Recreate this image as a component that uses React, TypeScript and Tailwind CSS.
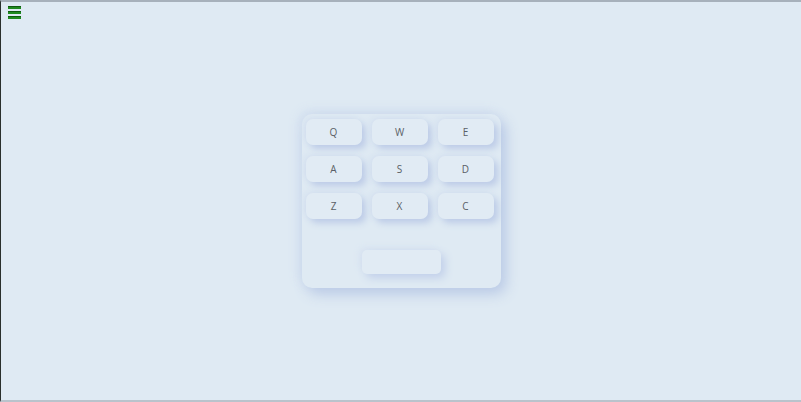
import React from "react";

const rows = [
  ["Q", "W", "E"],
  ["A", "S", "D"],
  ["Z", "X", "C"],
];

export default function App() {
  return (
    <div
      className="relative h-[402px] w-[801px] overflow-hidden bg-[#dfeaf3] border-t-[2px] border-t-[#a7b1bb] border-b-[2px] border-b-[#b9c3cc] border-l border-l-[#2a302c]"
      style={{ fontFamily: '"Open Sans", "Noto Sans", sans-serif' }}
    >
      <button className="absolute left-[7px] top-[4px] flex flex-col gap-[2px] p-0">
        <span className="block h-[3px] w-[13px] bg-[#1f8a1f] border-t border-t-[#0f5a0f]" />
        <span className="block h-[3px] w-[13px] bg-[#1f8a1f] border-t border-t-[#0f5a0f]" />
        <span className="block h-[3px] w-[13px] bg-[#1f8a1f] border-t border-t-[#0f5a0f]" />
      </button>

      <div className="flex h-full w-full items-center justify-center">
        <div className="flex h-[174px] w-[199px] flex-col rounded-[10px] bg-[#dfeaf3] pl-[4px] pt-[5px] shadow-[5px_6px_14px_#bacae6,-3px_-3px_12px_#d1deef]">
          <div className="grid grid-cols-[56px_56px_56px] gap-x-[10px] gap-y-[11px]">
            {rows.flat().map((k) => (
              <div
                key={k}
                className="flex h-[26px] items-center justify-center rounded-[7px] bg-[#e1ebf4] text-[10px] text-[#5a5f66] shadow-[4px_4px_7px_#bccbe7,-3px_-2px_6px_#d6e2f0]"
              >
                {k}
              </div>
            ))}
          </div>
          <div className="mt-[31px] flex justify-center pr-[4px]">
            <div className="h-[24px] w-[79px] rounded-[5px] bg-[#e1ebf4] shadow-[4px_4px_8px_#c2d0ea,-3px_-3px_6px_#d8e3f1]" />
          </div>
        </div>
      </div>
    </div>
  );
}
